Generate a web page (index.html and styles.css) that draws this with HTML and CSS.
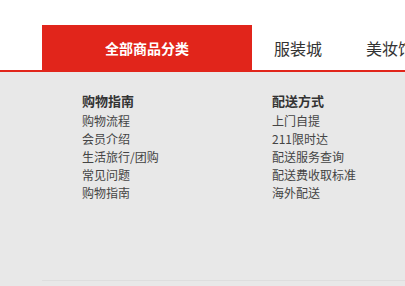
FILE: index.html
```html
<!DOCTYPE html>
<html lang="zh">
<head>
<meta charset="utf-8">
<link rel="stylesheet" href="styles.css">
</head>
<body>
<div class="top"></div>
<nav class="nav">
  <div class="all">全部商品分类</div>
  <a class="nav-item">服装城</a>
  <a class="nav-item">美妆馆</a>
</nav>
<div class="drop">
  <div class="drop-inner">
    <div class="col">
      <div class="col-title">购物指南</div>
      <div class="col-item">购物流程</div>
      <div class="col-item">会员介绍</div>
      <div class="col-item">生活旅行/团购</div>
      <div class="col-item">常见问题</div>
      <div class="col-item">购物指南</div>
    </div>
    <div class="col">
      <div class="col-title">配送方式</div>
      <div class="col-item">上门自提</div>
      <div class="col-item">211限时达</div>
      <div class="col-item">配送服务查询</div>
      <div class="col-item">配送费收取标准</div>
      <div class="col-item">海外配送</div>
    </div>
  </div>
</div>
</body>
</html>
```
FILE: styles.css
```css
html, body {
  margin: 0;
  padding: 0;
  background: #e8e8e8;
  overflow: hidden;
  font-family: "Noto Sans CJK SC", "Noto Sans", sans-serif;
}
.top {
  height: 25px;
  background: #fff;
}
.nav {
  display: flex;
  height: 45px;
  padding-left: 42px;
  background: #fff;
  border-bottom: 2px solid #e1251b;
  white-space: nowrap;
  overflow: hidden;
}
.all {
  flex: 0 0 210px;
  background: #e1251b;
  color: #fff;
  font-size: 14px;
  font-weight: bold;
  display: flex;
  align-items: center;
  justify-content: center;
}
.nav-item {
  flex: 0 0 auto;
  padding: 0 22px;
  font-size: 16px;
  color: #333;
  display: flex;
  align-items: center;
}
.drop {
  height: 214px;
  background: #e8e8e8;
}
.drop-inner {
  margin-left: 42px;
  height: 189px;
  padding: 19px 0 0 40px;
  border-bottom: 1px solid #dedede;
  display: flex;
  overflow: hidden;
}
.col {
  flex: 0 0 190px;
  display: flex;
  flex-direction: column;
}
.col-title {
  font-size: 13px;
  font-weight: bold;
  color: #333;
  line-height: 20px;
  margin-bottom: 1px;
}
.col-item {
  font-size: 12px;
  color: #444;
  line-height: 18px;
}
```
